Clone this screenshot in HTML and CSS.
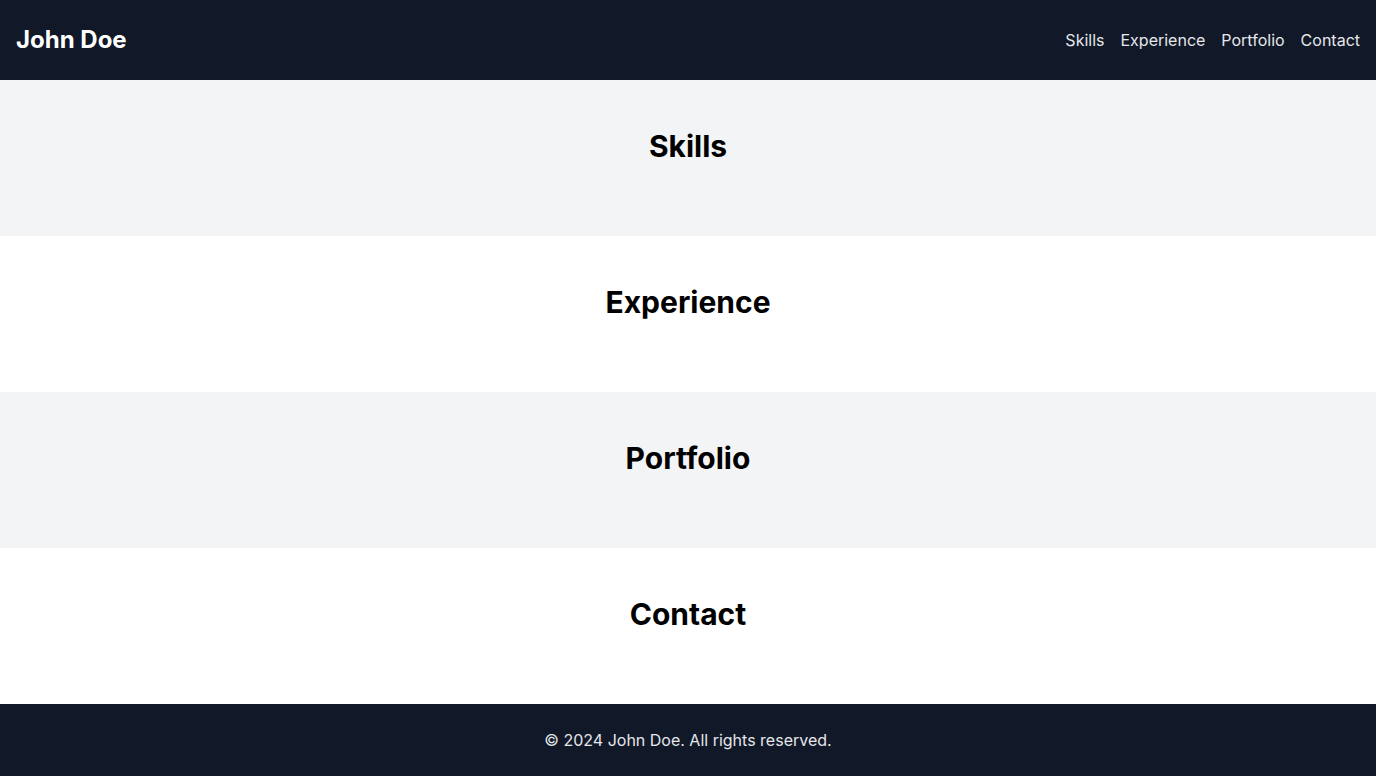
FILE: index.html
```html
<!DOCTYPE html>
<html lang="en">
<head>
<meta charset="utf-8">
<title>John Doe</title>
<link rel="stylesheet" href="styles.css">
</head>
<body>
<header class="site-header">
  <div class="brand">John Doe</div>
  <nav class="nav">
    <a href="#skills">Skills</a>
    <a href="#experience">Experience</a>
    <a href="#portfolio">Portfolio</a>
    <a href="#contact">Contact</a>
  </nav>
</header>
<main>
  <section id="skills" class="section alt"><h2>Skills</h2></section>
  <section id="experience" class="section"><h2>Experience</h2></section>
  <section id="portfolio" class="section alt"><h2>Portfolio</h2></section>
  <section id="contact" class="section"><h2>Contact</h2></section>
</main>
<footer class="site-footer">© 2024 John Doe. All rights reserved.</footer>
</body>
</html>
```
FILE: styles.css
```css
* { box-sizing: border-box; }
html, body { margin: 0; padding: 0; }
body {
  font-family: Inter, "Noto Sans", sans-serif;
  font-size: 16px;
  line-height: 24px;
  color: #000;
  background: #fff;
}
.site-header {
  background: #111827;
  color: #fff;
  display: flex;
  justify-content: space-between;
  align-items: center;
  padding: 24px 16px;
  height: 80px;
}
.brand {
  font-size: 24px;
  line-height: 32px;
  font-weight: 700;
}
.nav {
  display: flex;
  gap: 16px;
}
.nav a {
  color: #e5e7eb;
  text-decoration: none;
}
.section {
  padding: 48px 16px;
  text-align: center;
  background: #fff;
}
.section.alt { background: #f3f4f6; }
.section h2 {
  margin: 0 0 24px;
  font-size: 30px;
  line-height: 36px;
  font-weight: 700;
}
.site-footer {
  background: #111827;
  color: #e5e7eb;
  text-align: center;
  padding: 24px 16px;
}
```
